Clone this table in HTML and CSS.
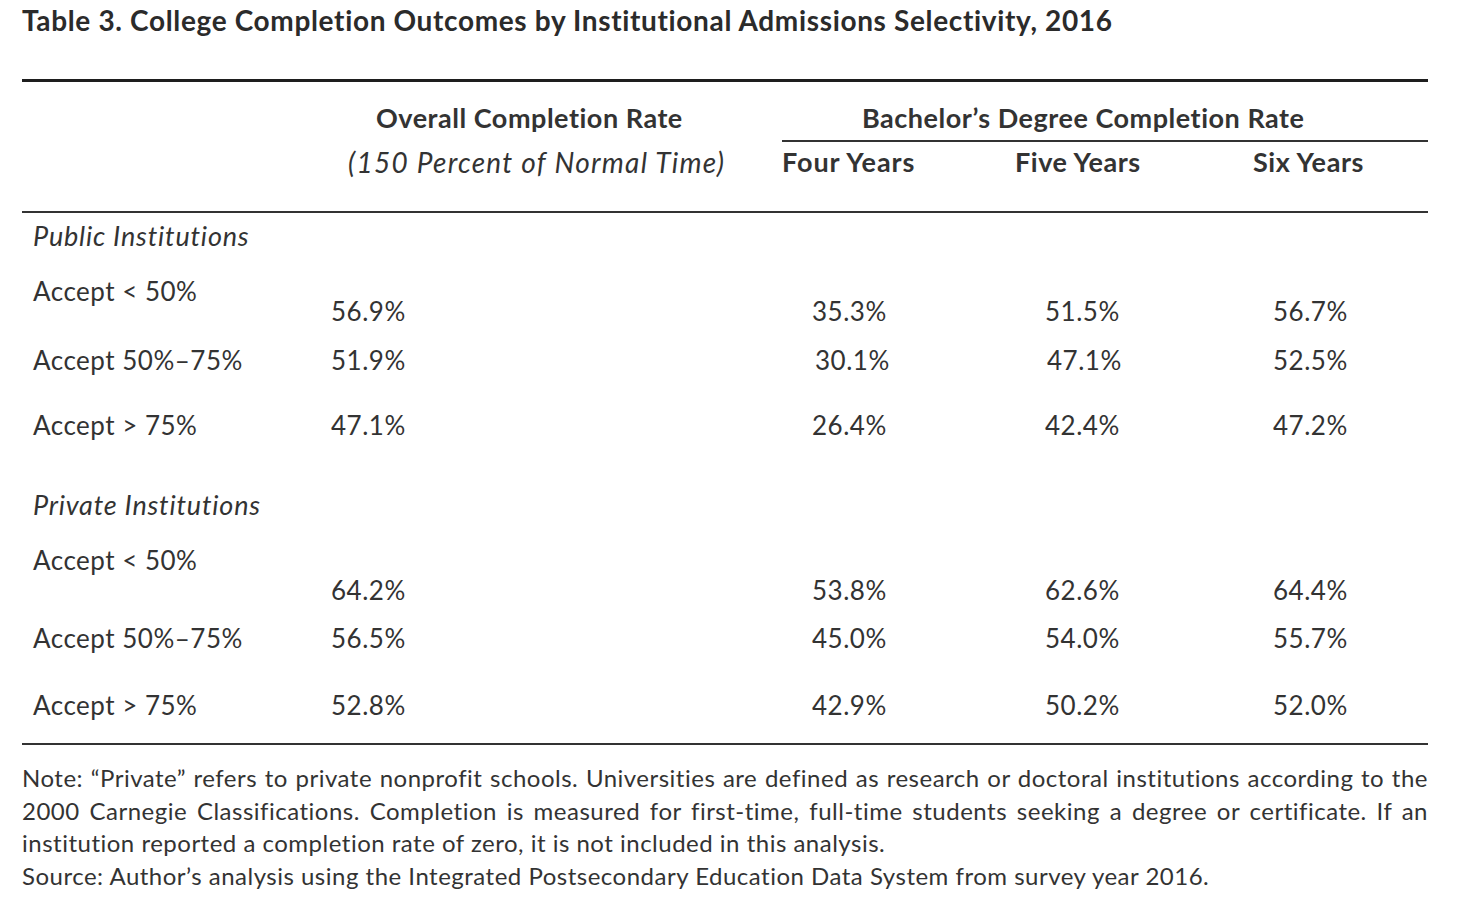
FILE: index.html
```html
<!DOCTYPE html>
<html lang="en">
<head>
<meta charset="utf-8">
<title>Table 3</title>
<link rel="stylesheet" href="styles.css">
</head>
<body>
<div class="page">
  <h1 class="title">Table 3. College Completion Outcomes by Institutional Admissions Selectivity, 2016</h1>
  <div class="table">
    <div class="head">
      <div class="hrow hrow1">
        <div class="c-label"></div>
        <div class="c-overall"><span class="h-overall">Overall Completion Rate</span></div>
        <div class="c-bach"><span class="h-bach">Bachelor’s Degree Completion Rate</span></div>
      </div>
      <div class="hrow hrow2">
        <div class="c-label"></div>
        <div class="c-overall"><span class="h-sub">(150 Percent of Normal Time)</span></div>
        <div class="c-four"><span class="h-four">Four Years</span></div>
        <div class="c-five"><span class="h-five">Five Years</span></div>
        <div class="c-six"><span class="h-six">Six Years</span></div>
      </div>
    </div>
    <div class="body">
      <div class="row group g1"><div class="c-label"><em>Public Institutions</em></div></div>
      <div class="row r-a drop20">
        <div class="c-label">Accept &lt; 50%</div>
        <div class="c-overall v">56.9%</div>
        <div class="c-four v">35.3%</div>
        <div class="c-five v">51.5%</div>
        <div class="c-six v">56.7%</div>
      </div>
      <div class="row r-b">
        <div class="c-label">Accept 50%–75%</div>
        <div class="c-overall v">51.9%</div>
        <div class="c-four v nudge">30.1%</div>
        <div class="c-five v nudge">47.1%</div>
        <div class="c-six v">52.5%</div>
      </div>
      <div class="row r-c">
        <div class="c-label">Accept &gt; 75%</div>
        <div class="c-overall v">47.1%</div>
        <div class="c-four v">26.4%</div>
        <div class="c-five v">42.4%</div>
        <div class="c-six v">47.2%</div>
      </div>
      <div class="row group g2"><div class="c-label"><em>Private Institutions</em></div></div>
      <div class="row r-d drop30">
        <div class="c-label">Accept &lt; 50%</div>
        <div class="c-overall v">64.2%</div>
        <div class="c-four v">53.8%</div>
        <div class="c-five v">62.6%</div>
        <div class="c-six v">64.4%</div>
      </div>
      <div class="row r-e">
        <div class="c-label">Accept 50%–75%</div>
        <div class="c-overall v">56.5%</div>
        <div class="c-four v">45.0%</div>
        <div class="c-five v">54.0%</div>
        <div class="c-six v">55.7%</div>
      </div>
      <div class="row r-f">
        <div class="c-label">Accept &gt; 75%</div>
        <div class="c-overall v">52.8%</div>
        <div class="c-four v">42.9%</div>
        <div class="c-five v">50.2%</div>
        <div class="c-six v">52.0%</div>
      </div>
    </div>
  </div>
  <div class="notes">
    <span class="jline">Note: “Private” refers to private nonprofit schools. Universities are defined as research or doctoral institutions according to the</span>
    <span class="jline">2000 Carnegie Classifications. Completion is measured for first-time, full-time students seeking a degree or certificate. If an</span>
    <span class="line">institution reported a completion rate of zero, it is not included in this analysis.</span>
    <span class="line">Source: Author’s analysis using the Integrated Postsecondary Education Data System from survey year 2016.</span>
  </div>
</div>
</body>
</html>
```

FILE: styles.css
```css
* { box-sizing: border-box; }
html, body { margin: 0; padding: 0; background: #fff; }
body {
  font-family: Lato, "Open Sans", "Liberation Sans", sans-serif;
  color: #333;
}
.page {
  width: 1480px;
  padding-left: 22px;
}
.title {
  margin: 0;
  height: 40px;
  line-height: 40px;
  font-size: 28px;
  letter-spacing: 0.65px;
  font-weight: 700;
  color: #2b2b2b;
  white-space: nowrap;
}
.table {
  width: 1406px;
  margin-top: 39px;
  border-top: 3px solid #1e1e1e;
  border-bottom: 2px solid #333;
}
.head {
  border-bottom: 2px solid #333;
}
.hrow {
  display: grid;
  grid-template-columns: 300px 460px 230px 230px 186px;
}
.hrow1 { height: 58px; }
.hrow1 .c-bach {
  grid-column: 3 / 6;
  border-bottom: 2px solid #333;
}
.hrow1 > div {
  padding-top: 18px;
  line-height: 36px;
}
.hrow2 > div {
  padding-top: 4px;
  line-height: 36px;
  height: 71px;
}
.h-overall, .h-bach, .h-four, .h-five, .h-six {
  font-weight: 700;
  font-size: 27px;
  letter-spacing: 0.52px;
  white-space: nowrap;
}
.h-overall { margin-left: 54px; }
.h-bach { margin-left: 80px; }
.h-four { letter-spacing: 0.9px; }
.h-five { margin-left: 3px; letter-spacing: 0.55px; }
.h-six { margin-left: 11px; letter-spacing: 0.6px; }
.h-sub {
  margin-left: 26px;
  font-style: italic;
  font-size: 28px;
  letter-spacing: 1.25px;
  white-space: nowrap;
}

.body { padding-top: 5px; }
.row {
  display: grid;
  grid-template-columns: 300px 460px 230px 230px 186px;
  font-size: 26px;
  letter-spacing: 0.5px;
  line-height: 36px;
  align-items: start;
}
.row em {
  font-size: 27px;
  letter-spacing: 0.8px;
}
.row .c-label { padding-left: 11px; white-space: nowrap; }
.row .c-overall { padding-left: 9px; }
.row .c-four { padding-left: 30px; }
.row .c-five { padding-left: 33px; }
.row .c-six { padding-left: 31px; }
.row .nudge { padding-left: 33px; }
.row .c-five.nudge { padding-left: 35px; }

.g1 { height: 55px; }
.r-a { height: 69px; }
.r-b { height: 65px; }
.r-c { height: 80px; }
.g2 { height: 55px; }
.r-d { height: 78px; }
.r-e { height: 67px; }
.r-f { height: 56px; }
.drop20 .v { margin-top: 20px; }
.drop30 .v { margin-top: 30px; }

.notes {
  width: 1406px;
  padding-top: 17px;
  font-size: 24px;
  letter-spacing: 0.5px;
  line-height: 32.7px;
}
.notes .jline {
  display: block;
  text-align: justify;
  text-align-last: justify;
  white-space: nowrap;
}
.notes .line { display: block; white-space: nowrap; }
```
